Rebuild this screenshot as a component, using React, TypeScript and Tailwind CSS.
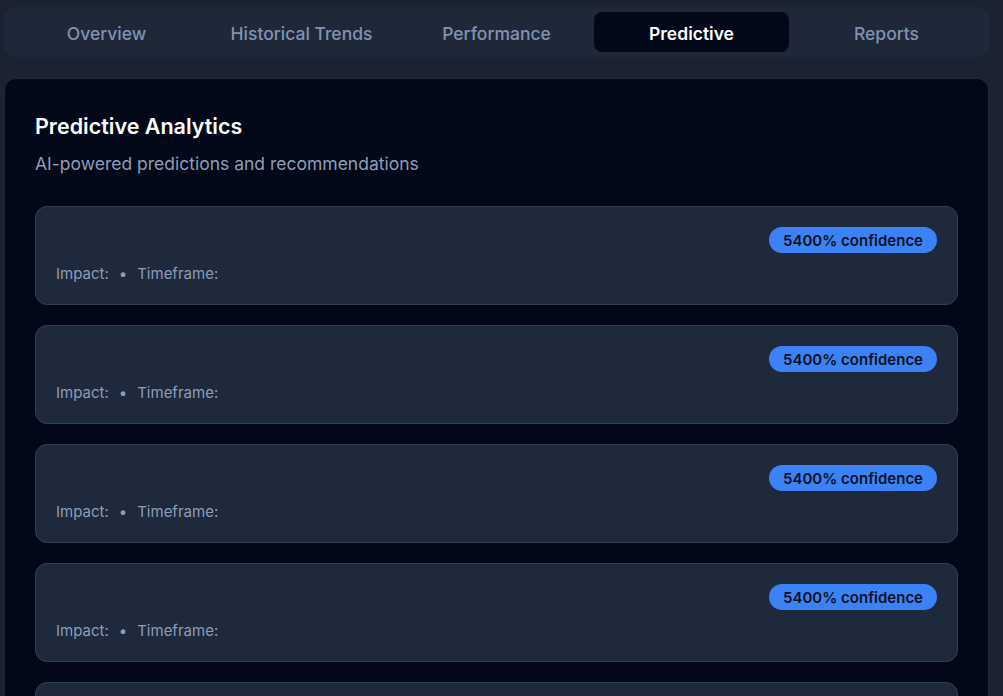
import React from "react"

const tabs = ["Overview", "Historical Trends", "Performance", "Predictive", "Reports"]

export default function App() {
  const predictions = Array.from({ length: 6 }, () => ({
    title: "",
    impact: "",
    timeframe: "",
    confidence: 54,
  }))

  return (
    <div className="min-h-screen bg-[#1b2333] pl-1 pr-[14px] pt-[7px] font-['Inter',sans-serif]">
      {/* Tabs */}
      <div className="grid grid-cols-5 rounded-xl bg-[#1f2839] p-[5px]">
        {tabs.map((tab) => (
          <button
            key={tab}
            className={
              tab === "Predictive"
                ? "h-10 rounded-lg bg-[#020817] pt-1 text-[17.5px] font-semibold text-white"
                : "h-10 rounded-lg pt-1 text-[17.5px] font-medium text-[#8193b0]"
            }
          >
            {tab}
          </button>
        ))}
      </div>

      {/* Predictive card */}
      <div className="mt-[21px] rounded-xl border border-[#1e293b] bg-[#020817] px-[30px] pb-8 pt-[33px]">
        <h3 className="text-[21.5px] font-semibold leading-7 text-white">Predictive Analytics</h3>
        <p className="mt-3 text-[17.5px] leading-6 text-[#8c9db9]">
          AI-powered predictions and recommendations
        </p>

        <div className="mt-[30px] flex flex-col gap-5">
          {predictions.map((p, i) => (
            <div key={i} className="rounded-xl border border-[#334155] bg-[#1e293b] p-5">
              <div className="flex items-start justify-between">
                <div>
                  <h4 className="font-semibold text-white">{p.title}</h4>
                </div>
                <span className="rounded-full bg-[#3b82f6] px-[14px] pb-[2px] pt-[4px] text-[15px] font-semibold leading-5 text-[#0b1220]">
                  {p.confidence * 100}% confidence
                </span>
              </div>
              <div className="mt-[11px] flex items-center gap-[10px] text-[15px] leading-5 text-[#8c9db9]">
                <span>Impact: {p.impact}</span>
                <span>•</span>
                <span>Timeframe: {p.timeframe}</span>
              </div>
            </div>
          ))}
        </div>
      </div>
    </div>
  )
}
